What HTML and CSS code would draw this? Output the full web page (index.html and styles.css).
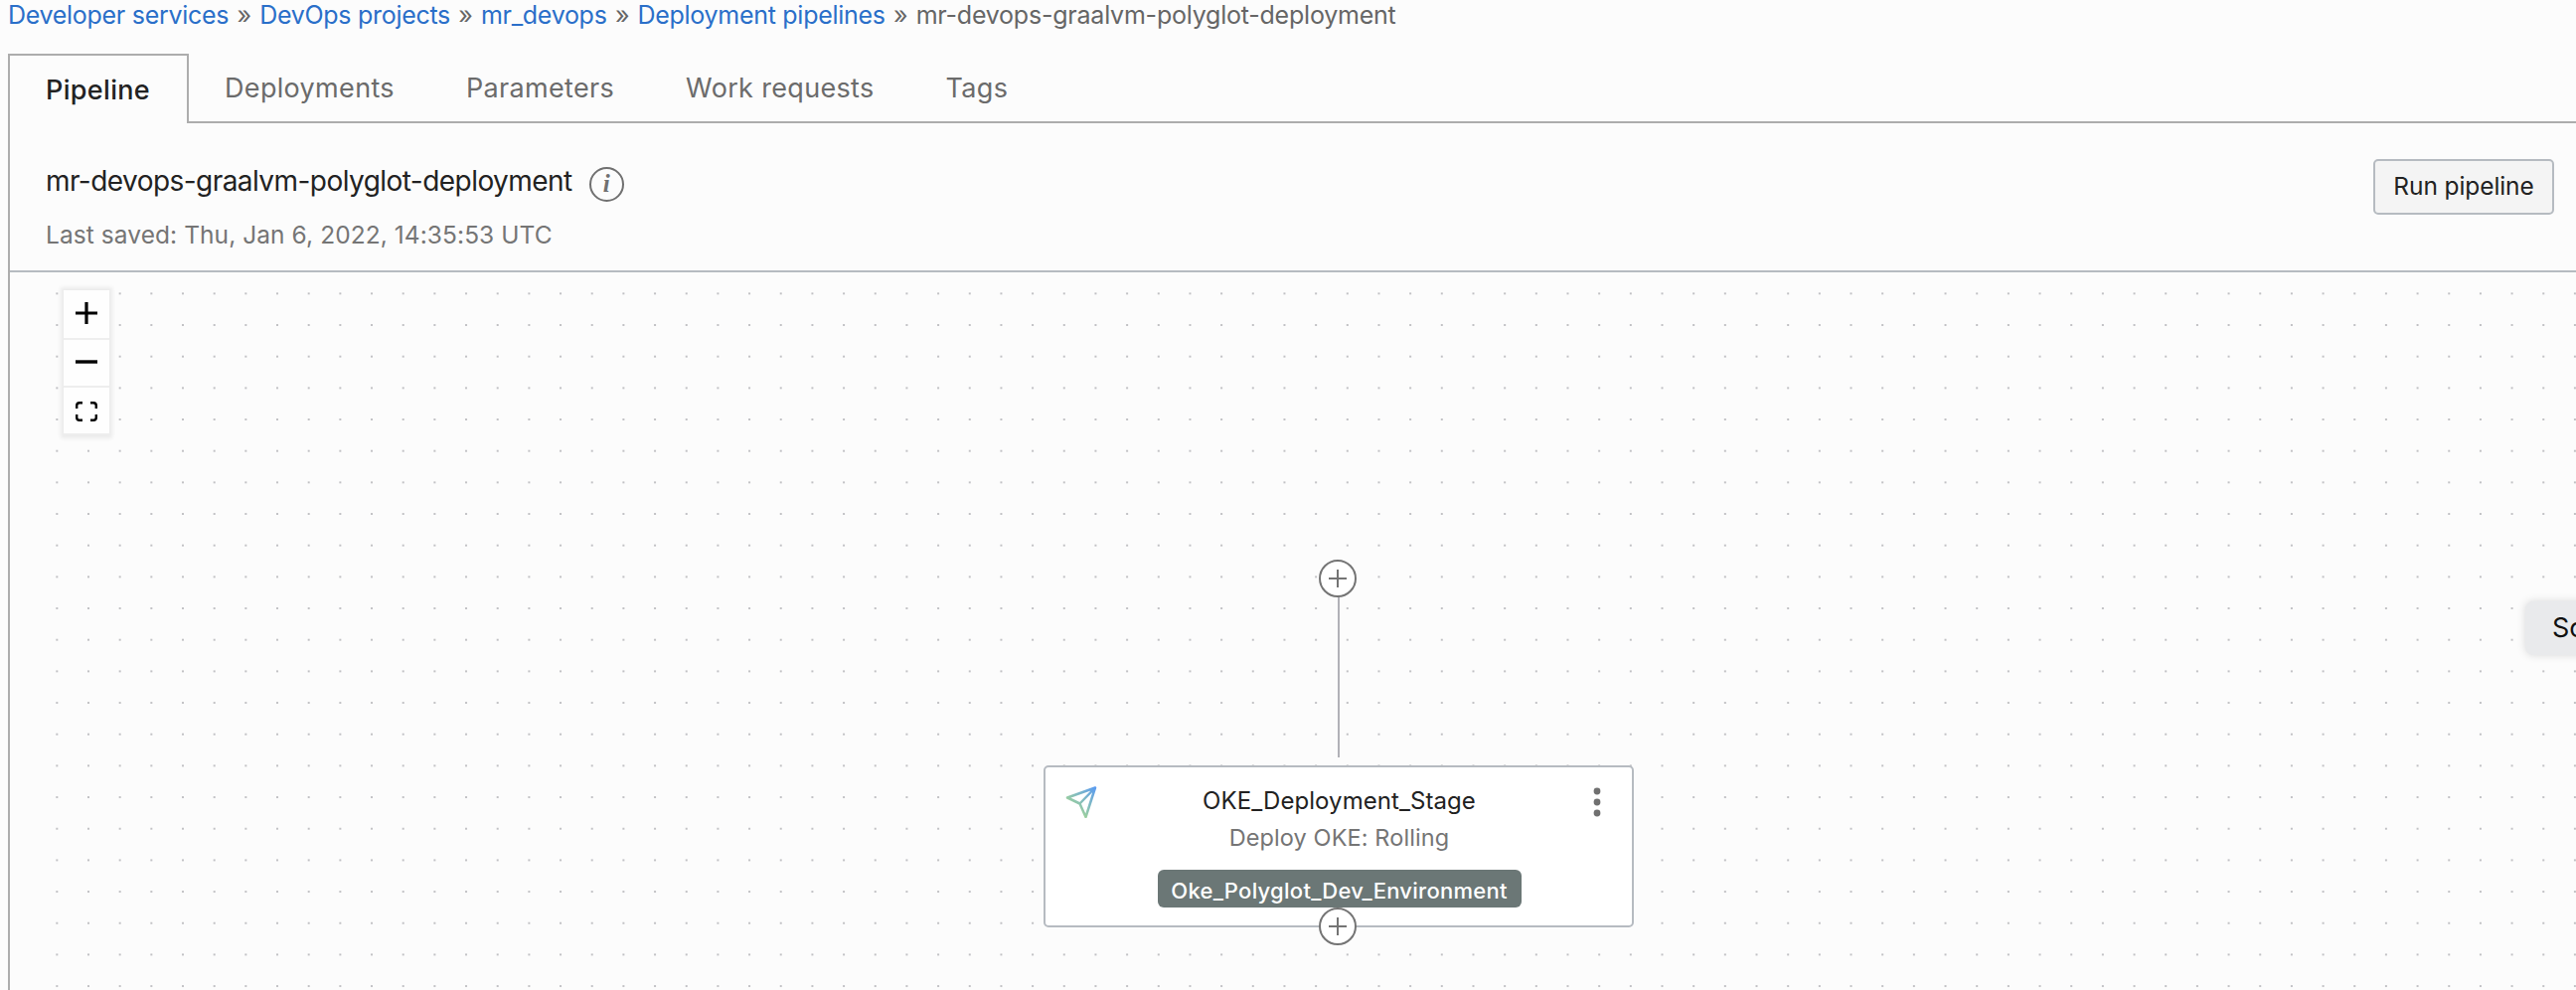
FILE: index.html
```html
<!DOCTYPE html>
<html lang="en">
<head>
<meta charset="utf-8">
<title>Deployment pipeline</title>
<link rel="stylesheet" href="styles.css">
</head>
<body>
<nav class="crumbs"><a>Developer services</a><i>»</i><a>DevOps projects</a><i>»</i><a>mr_devops</a><i>»</i><a>Deployment pipelines</a><i>»</i><span>mr-devops-graalvm-polyglot-deployment</span></nav>
<div class="tabs">
  <div class="tab active">Pipeline</div>
  <div class="tab">Deployments</div>
  <div class="tab">Parameters</div>
  <div class="tab">Work requests</div>
  <div class="tab">Tags</div>
</div>
<main class="panel">
  <header class="head">
    <div class="info">
      <div class="title-row">
        <h1 class="title">mr-devops-graalvm-polyglot-deployment</h1>
        <span class="info-icon">i</span>
      </div>
      <p class="saved">Last saved: Thu, Jan 6, 2022, 14:35:53 UTC</p>
    </div>
    <button class="run">Run pipeline</button>
  </header>
  <section class="canvas">
    <svg class="grid" width="2582" height="722">
      <defs><pattern id="dots" x="31.5" y="5.5" width="31.67" height="31.67" patternUnits="userSpaceOnUse"><circle cx="15.83" cy="15.83" r="1.1" fill="#b4b4b8"/></pattern></defs>
      <rect x="31.5" width="2551" height="722" fill="url(#dots)"/>
    </svg>
    <div class="zoom">
      <span class="zbtn zin"><svg width="22" height="22" viewBox="0 0 22 22"><path d="M0 11h22M11 0v22" stroke="#000" stroke-width="3.2"/></svg></span>
      <span class="zbtn zout"><svg width="22" height="22" viewBox="0 0 22 22"><path d="M0 11h22" stroke="#000" stroke-width="3.4"/></svg></span>
      <span class="zbtn zfit"><svg width="22" height="20" viewBox="0 0 22 20"><path d="M1.2 7V4Q1.2 1.2 4 1.2H7M15 1.2h3Q20.8 1.2 20.8 4V7M20.8 13v3Q20.8 18.8 18 18.8H15M7 18.8H4Q1.2 18.8 1.2 16V13" fill="none" stroke="#000" stroke-width="2.4"/></svg></span>
    </div>
    <div class="edge"></div>
    <article class="node">
      <svg class="send" width="32" height="32" viewBox="0 0 32 32"><defs><linearGradient id="g" x1="1" y1="0" x2="0.35" y2="0.75"><stop offset="0" stop-color="#5b9cf0"/><stop offset="1" stop-color="#9bcf9f"/></linearGradient></defs><path d="M30 1.5L2 11.5L14.5 17.5L20.5 31ZM14.5 17.5L30 1.5" fill="none" stroke="url(#g)" stroke-width="2.5" stroke-linejoin="round"/></svg>
      <div class="stage">
        <div class="stage-name">OKE_Deployment_Stage</div>
        <div class="stage-type">Deploy OKE: Rolling</div>
        <div class="badge">Oke_Polyglot_Dev_Environment</div>
      </div>
      <svg class="kebab" width="8" height="32" viewBox="0 0 8 32"><g fill="#707070"><circle cx="4" cy="5" r="3.4"/><circle cx="4" cy="16" r="3.4"/><circle cx="4" cy="27" r="3.4"/></g></svg>
    </article>
    <svg class="add add-top" width="38" height="38" viewBox="0 0 38 38"><circle cx="19" cy="19" r="18" fill="#fff" stroke="#747474" stroke-width="2"/><path d="M10 19h18M19 10v18" stroke="#747474" stroke-width="2"/></svg>
    <svg class="add add-bottom" width="38" height="38" viewBox="0 0 38 38"><circle cx="19" cy="19" r="18" fill="#fff" stroke="#747474" stroke-width="2"/><path d="M10 19h18M19 10v18" stroke="#747474" stroke-width="2"/></svg>
    <div class="tip">Scroll</div>
  </section>
</main>
</body>
</html>
```
FILE: styles.css
```css
* { box-sizing: border-box; }
body { margin: 0; width: 2592px; height: 996px; overflow: hidden; background: #fcfcfc; color: #222; font-family: Inter, "Liberation Sans", sans-serif; display: flex; flex-direction: column; }
.crumbs { height: 54px; padding-left: 8px; display: flex; font-size: 25px; line-height: 30px; letter-spacing: -0.22px; white-space: nowrap; color: #666; }
.crumbs a { color: #2a6fc9; letter-spacing: -0.29px; }
.crumbs i { font-style: normal; width: 31px; text-align: center; }
.tabs { height: 70px; margin-left: 8px; display: flex; border-bottom: 2px solid #adadad; font-size: 27px; letter-spacing: 0.33px; color: #6b6b6b; white-space: nowrap; flex: none; }
.tab { padding: 0 36px; height: 70px; line-height: 69px; }
.active { width: 182px; padding: 0 0 0 36px; border: 2px solid #adadad; border-bottom: 0; background: #fcfcfc; color: #222; font-weight: 500; }
.panel { flex: 1; margin-left: 8px; border-left: 2px solid #adadad; }
.head { height: 150px; border-bottom: 2px solid #b6bbc1; display: flex; justify-content: space-between; padding: 36px 22px 0 36px; }
.title-row { display: flex; gap: 17px; margin-top: 4px; }
.title { margin: 0; font-size: 28px; font-weight: 400; line-height: 36px; letter-spacing: -0.55px; }
.info-icon { width: 35px; height: 35px; margin-top: 4px; border: 2px solid #707070; border-radius: 50%; color: #707070; font: italic bold 25px/30px "Liberation Serif", serif; text-align: center; }
.saved { margin: 16px 0 0; font-size: 24.5px; line-height: 34px; letter-spacing: 0.07px; color: #757575; }
.run { width: 182px; height: 56px; padding: 0 0 2px; border: 2px solid #b6bbc1; border-radius: 5px; background: #f4f4f4; color: #222; font: 24.5px/48px Inter, sans-serif; letter-spacing: -0.1px; white-space: nowrap; }
.canvas { position: relative; height: 722px; overflow: hidden; }
.grid { display: block; }
.zoom { position: absolute; left: 54px; top: 18px; width: 46px; box-shadow: 0 0 4px 3px rgba(0,0,0,.07); }
.zbtn { display: flex; align-items: center; justify-content: center; height: 48px; background: #fefefe; border-bottom: 2px solid #eee; }
.zin { height: 50px; padding-bottom: 2px; }
.zout { padding-bottom: 3px; }
.zfit { padding-top: 1px; }
.edge { position: absolute; left: 1336px; top: 326px; width: 2px; height: 162px; background: #b1b1b7; }
.node { position: absolute; left: 1040px; top: 496px; width: 594px; height: 163px; border: 2px solid #b6bbc1; border-radius: 5px; background: #fff; display: flex; justify-content: space-between; padding: 19px 19px 0 20px; }
.kebab { margin: 0 12px; }
.stage { display: flex; flex-direction: column; align-items: center; white-space: nowrap; }
.stage-name { font-size: 24px; line-height: 30px; letter-spacing: 0.07px; }
.stage-type { font-size: 23.5px; line-height: 32px; margin-top: 6px; letter-spacing: 0.1px; color: #757575; }
.badge { width: 366px; height: 38px; margin-top: 16px; border-radius: 6px; background: #6b7776; color: #fff; font-size: 22px; font-weight: 500; letter-spacing: 0.27px; line-height: 42px; text-align: center; }
.add { position: absolute; left: 1317px; }
.add-top { top: 289px; }
.add-bottom { top: 639px; }
.tip { position: absolute; left: 2531px; top: 331px; width: 140px; height: 54px; padding-left: 27px; border-radius: 8px; background: #e9eaec; color: #111; font-size: 27px; line-height: 53px; box-shadow: 0 0 8px rgba(0,0,0,.15); }
```
